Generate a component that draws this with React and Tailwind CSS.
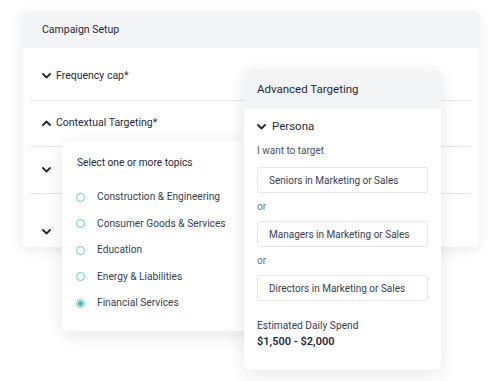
import React from "react";

const Chevron = ({ up = false, className = "" }) => (
  <svg width="9" height="6" viewBox="0 0 9 6" className={className} fill="none">
    <path
      d={up ? "M1 5 L4.5 1.5 L8 5" : "M1 1 L4.5 4.5 L8 1"}
      stroke="#1f2937"
      strokeWidth="1.8"
      strokeLinecap="round"
      strokeLinejoin="round"
    />
  </svg>
);

const Radio = ({ checked }) => (
  <span className="w-[9px] h-[9px] rounded-full border-[1.7px] border-[#55cfc4] flex items-center justify-center">
    {checked && <span className="w-[5px] h-[5px] rounded-full bg-[#3fbcb2]" />}
  </span>
);

export default function App() {
  const topics = [
    ["Construction & Engineering", false],
    ["Consumer Goods & Services", false],
    ["Education", false],
    ["Energy & Liabilities", false],
    ["Financial Services", true],
  ];
  const inputs = [
    "Seniors in Marketing or Sales",
    "Managers in Marketing or Sales",
    "Directors in Marketing or Sales",
  ];
  return (
    <div
      className="relative w-[500px] h-[381px] bg-white overflow-hidden text-[#374151]"
      style={{ fontFamily: "Roboto, 'Noto Sans', sans-serif" }}
    >
      {/* Main card */}
      <div className="ml-[22px] mt-[11px] w-[457px] h-[236px] rounded-[6px] bg-white shadow-[0_3px_14px_rgba(0,0,0,0.09)] overflow-hidden">
        <div className="h-[37px] bg-[#f3f4f6] pl-[20px] flex items-center text-[10.5px] text-[#1f2937]">
          Campaign Setup
        </div>
        <div className="px-[8px]">
          <div className="h-[53px] border-b border-[#e5e7eb] flex items-center pl-[12px] pt-[3px] gap-[5px] text-[10.5px] text-[#1f2937]">
            <Chevron />
            <span>Frequency cap*</span>
          </div>
          <div className="h-[46px] border-b border-[#e5e7eb] flex items-center pl-[12px] pb-[2px] gap-[5px] text-[10.5px] text-[#1f2937]">
            <Chevron up />
            <span>Contextual Targeting*</span>
          </div>
          <div className="h-[47px] border-b border-[#e5e7eb] flex items-center pl-[12px]">
            <Chevron />
          </div>
          <div className="h-[52px] flex items-center pl-[12px] pt-[24px]">
            <Chevron />
          </div>
        </div>
      </div>

      {/* Topics card */}
      <div className="absolute left-[62px] top-[141px] w-[200px] h-[190px] rounded-[6px] bg-white shadow-[0_4px_18px_rgba(0,0,0,0.1)] pl-[14px] pt-[15px]">
        <div className="pl-[1px] text-[10.2px] leading-[14px] text-[#1f2937]">Select one or more topics</div>
        <div className="mt-[20px] flex flex-col gap-[12.5px]">
          {topics.map(([t, c]) => (
            <div key={t} className="flex items-center h-[14px]">
              <span className="mr-[12px]">
                <Radio checked={c} />
              </span>
              <span className="text-[10.2px] text-[#374151]">{t}</span>
            </div>
          ))}
        </div>
      </div>

      {/* Advanced Targeting card */}
      <div className="absolute left-[244px] top-[70px] w-[197px] h-[300px] rounded-[6px] bg-white shadow-[0_4px_18px_rgba(0,0,0,0.1)] overflow-hidden">
        <div className="h-[39px] bg-[#f3f4f6] pl-[13px] flex items-center text-[11.5px] text-[#1f2937]">
          Advanced Targeting
        </div>
        <div className="px-[13px]">
          <div className="mt-[11px] flex items-center gap-[6px] text-[11.5px] text-[#1f2937] h-[14px]">
            <Chevron />
            <span>Persona</span>
          </div>
          <div className="mt-[10px] text-[10px] leading-[14px] text-[#4b5563]">I want to target</div>
          {inputs.map((t, i) => (
            <React.Fragment key={t}>
              {i > 0 && (
                <div className="h-[28px] pb-[1px] flex items-center text-[10px] text-[#6b7280]">or</div>
              )}
              <div
                className={`${i === 0 ? "mt-[9px]" : ""} w-[171px] h-[26px] border border-[#e5e7eb] rounded-[2px] flex items-center pl-[11px] text-[10px] text-[#374151]`}
              >
                {t}
              </div>
            </React.Fragment>
          ))}
          <div className="mt-[18px] text-[10.2px] leading-[14px] text-[#374151]">Estimated Daily Spend</div>
          <div className="mt-[2px] text-[11px] leading-[14px] font-semibold text-[#1f2937]">$1,500 - $2,000</div>
        </div>
      </div>
    </div>
  );
}
